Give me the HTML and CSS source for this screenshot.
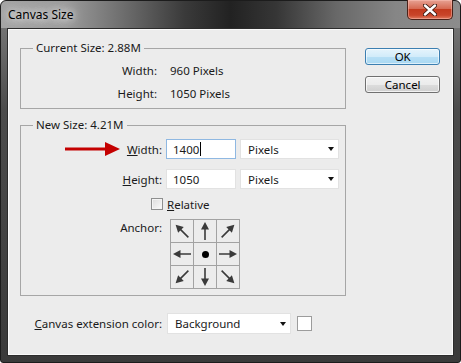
FILE: index.html
```html
<!DOCTYPE html>
<html>
    <head>
        <title>Canvas Size</title>
        <meta name="viewport" content="width=device-width, initial-scale=1.0">
        <link rel="stylesheet" href="styles.css">
    </head>
    <body>
        <svg width="0" height="0" class="defs">
            <symbol id="arrow" viewBox="0 0 22 22">
                <line x1="11" y1="20" x2="11" y2="8" stroke="#3a3a3a" stroke-width="1.6"/>
                <polygon points="11,2 7,9.5 15,9.5" fill="#3a3a3a"/>
            </symbol>
        </svg>
        <div class="window">
            <div class="titlebar">
                <span class="title">Canvas Size</span>
                <button class="close">
                    <svg width="14" height="12" viewBox="0 0 14 12">
                        <path d="M2 1.5 L12 10.5 M12 1.5 L2 10.5" stroke="#3b1a12" stroke-width="4.2" stroke-linecap="round"/>
                        <path d="M2 1.5 L12 10.5 M12 1.5 L2 10.5" stroke="#fff" stroke-width="2.4" stroke-linecap="round"/>
                    </svg>
                </button>
            </div>
            <div class="client">
                <div class="top">
                    <div class="groups">
                        <fieldset class="group current">
                            <legend>Current Size: 2.88M</legend>
                            <div class="info">
                                <span class="label">Width:</span><span>960 Pixels</span>
                                <span class="label">Height:</span><span>1050 Pixels</span>
                            </div>
                        </fieldset>
                        <fieldset class="group new">
                            <legend>New Size: 4.21M</legend>
                            <div class="form">
                                <div class="label">
                                    <svg class="pointer" width="55" height="16" viewBox="0 0 55 16">
                                        <rect x="0" y="6.5" width="42" height="3" fill="#c40000"/>
                                        <polygon points="40,1 55,8 40,15" fill="#c40000"/>
                                    </svg>
                                    <span><u>W</u>idth:</span>
                                </div>
                                <div class="field focused">1400<span class="caret"></span></div>
                                <div class="select">Pixels<span class="drop"></span></div>

                                <div class="label"><span><u>H</u>eight:</span></div>
                                <div class="field">1050</div>
                                <div class="select">Pixels<span class="drop"></span></div>

                                <div class="check-cell"><span class="checkbox"></span></div>
                                <div class="check-label"><u>R</u>elative</div>

                                <div class="label anchor-label">Anchor:</div>
                                <div class="anchor">
                                    <div class="cell"><svg width="22" height="22"><use href="#arrow" transform="rotate(-45 11 11)"/></svg></div>
                                    <div class="cell"><svg width="22" height="22"><use href="#arrow"/></svg></div>
                                    <div class="cell"><svg width="22" height="22"><use href="#arrow" transform="rotate(45 11 11)"/></svg></div>
                                    <div class="cell"><svg width="22" height="22"><use href="#arrow" transform="rotate(-90 11 11)"/></svg></div>
                                    <div class="cell"><span class="dot"></span></div>
                                    <div class="cell"><svg width="22" height="22"><use href="#arrow" transform="rotate(90 11 11)"/></svg></div>
                                    <div class="cell"><svg width="22" height="22"><use href="#arrow" transform="rotate(-135 11 11)"/></svg></div>
                                    <div class="cell"><svg width="22" height="22"><use href="#arrow" transform="rotate(180 11 11)"/></svg></div>
                                    <div class="cell"><svg width="22" height="22"><use href="#arrow" transform="rotate(135 11 11)"/></svg></div>
                                </div>
                            </div>
                        </fieldset>
                    </div>
                    <div class="buttons">
                        <button class="btn default">OK</button>
                        <button class="btn">Cancel</button>
                    </div>
                </div>
                <div class="extension">
                    <span class="label"><u>C</u>anvas extension color:</span>
                    <div class="select">Background<span class="drop"></span></div>
                    <span class="swatch"></span>
                </div>
            </div>
        </div>
    </body>
</html>
```

FILE: styles.css
```css
* {
    box-sizing: border-box;
}

body {
    margin: 0;
    background: #fff;
    font-family: "Noto Sans", sans-serif;
    font-size: 11.5px;
    color: #1a1a1a;
}

.defs {
    position: absolute;
}

.window {
    width: 461px;
    height: 363px;
    display: flex;
    flex-direction: column;
    padding: 0 6px 6px;
    border: 1px solid #1c1c1c;
    border-radius: 6px 6px 3px 3px;
    background:
        linear-gradient(90deg, #a4a4a4 0%, #9c9c9c 14%, #6c6c6c 27%, #3a3a3a 40%, #222 50%, #363636 60%, #686868 73%, #868686 86%, #8c8c8c 100%) top / 100% 27px no-repeat,
        linear-gradient(#808080, #4c4c4c 30%, #3a3a3a);
}

.titlebar {
    height: 27px;
    display: flex;
    align-items: center;
    padding-left: 1px;
}

.title {
    font-size: 12px;
    color: #000;
    text-shadow: 0 0 6px #e8e8e8, 0 0 10px #dcdcdc, 0 0 14px #d0d0d0;
}

.close {
    margin-left: auto;
    margin-right: 1px;
    align-self: flex-start;
    margin-top: -1px;
    width: 46px;
    height: 20px;
    padding: 0;
    border: 1px solid #4a2219;
    border-top: 0;
    border-radius: 0 0 5px 5px;
    background: linear-gradient(#e7a293 0%, #d66a53 45%, #c33a1e 50%, #c9452a 80%, #e07a5e 100%);
    box-shadow: inset 0 0 0 1px rgba(255, 200, 190, 0.45);
    display: flex;
    align-items: center;
    justify-content: center;
}

.client {
    flex: 1;
    background: #ececec;
    border: 1px solid #2c2c2c;
    box-shadow: inset 0 0 0 1px #fafafa;
    padding: 12px 13px 0 12px;
    display: flex;
    flex-direction: column;
}

.top {
    display: flex;
    gap: 19px;
}

.groups {
    width: 328px;
    display: flex;
    flex-direction: column;
    gap: 9px;
}

.group {
    margin: 0;
    min-width: 0;
    border: 1px solid #a6a6a6;
}

.group legend {
    margin-left: 12px;
    padding: 0 3px;
    line-height: 14px;
}

.current {
    padding: 4px 0 3px;
}

.new {
    padding: 7px 0 6px;
}

.info {
    display: grid;
    grid-template-columns: 136px auto;
    grid-auto-rows: 23px;
    column-gap: 13px;
    align-items: center;
}

.label {
    text-align: right;
}

.form {
    display: grid;
    grid-template-columns: 141px 70px 99px;
    grid-template-rows: 30px 25px 25px auto;
    column-gap: 4px;
    align-items: start;
}

.form .label {
    grid-column: 1;
    height: 20px;
    display: flex;
    align-items: center;
    justify-content: flex-end;
    gap: 7px;
}

.field, .select {
    height: 20px;
    background: #fff;
    border: 1px solid #e2e2e2;
    display: flex;
    align-items: center;
}

.field {
    padding-left: 6px;
}

.field.focused {
    border-color: #8fb8e2;
}

.caret {
    width: 1px;
    height: 14px;
    background: #000;
    margin-left: 1px;
}

.select {
    justify-content: space-between;
    padding: 0 4px 0 7px;
}

.drop {
    border-left: 3.5px solid transparent;
    border-right: 3.5px solid transparent;
    border-top: 4px solid #111;
}

.check-cell {
    grid-column: 1;
    height: 20px;
    display: flex;
    align-items: center;
    justify-content: flex-end;
    margin-right: -1px;
}

.checkbox {
    width: 12px;
    height: 12px;
    border: 1px solid #8e8f8f;
    background: linear-gradient(135deg, #dcdcdc, #fbfbfb);
    box-shadow: inset 0 0 0 1px #f4f4f4;
}

.check-label {
    grid-column: 2 / 4;
    height: 20px;
    display: flex;
    align-items: center;
    padding-left: 1px;
}

.form .anchor-label {
    height: 14px;
    margin-top: 1px;
}

.anchor {
    grid-column: 2 / 4;
    margin-left: 4px;
    display: grid;
    grid-template-columns: repeat(3, 23px);
    grid-auto-rows: 23px;
    width: 70px;
    border-top: 1px solid #a2a2a2;
    border-left: 1px solid #a2a2a2;
}

.cell {
    width: 23px;
    height: 23px;
    border-right: 1px solid #a2a2a2;
    border-bottom: 1px solid #a2a2a2;
    display: flex;
    align-items: center;
    justify-content: center;
}

.dot {
    width: 7px;
    height: 7px;
    border-radius: 50%;
    background: #000;
}

.buttons {
    width: 75px;
    display: flex;
    flex-direction: column;
    gap: 11px;
    padding-top: 7px;
}

.btn {
    height: 17px;
    padding: 0;
    font: inherit;
    color: #000;
    border-radius: 3px;
    border: 1px solid #707070;
    background: linear-gradient(#f2f2f2, #ebebeb 50%, #dddddd 50%, #cfcfcf);
    box-shadow: inset 0 0 0 1px rgba(255, 255, 255, 0.7);
}

.btn.default {
    border-color: #3c7fb1;
    background: linear-gradient(#e5f4fc, #d2ecfa 50%, #b8e0f6 50%, #a9d8f2);
    box-shadow: inset 0 0 0 1px rgba(255, 255, 255, 0.6);
}

.extension {
    margin-top: 17px;
    padding-left: 1px;
    display: grid;
    grid-template-columns: 141px 124px 15px;
    column-gap: 5px;
    align-items: center;
}

.extension .select {
    height: 21px;
}

.extension .swatch {
    width: 15px;
    height: 15px;
    margin-left: 1px;
    background: #fff;
    border: 1px solid #9c9c9c;
}
```
